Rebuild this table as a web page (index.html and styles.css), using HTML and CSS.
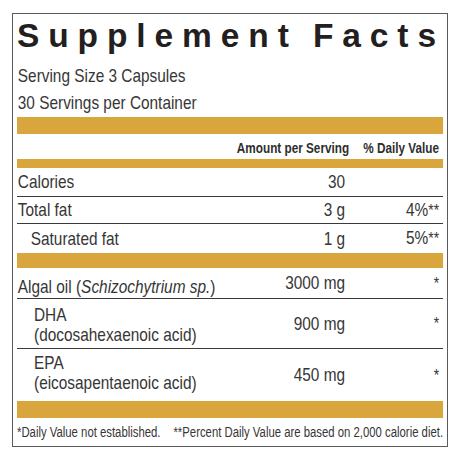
FILE: index.html
```html
<!DOCTYPE html>
<html>
<head>
<meta charset="utf-8">
<link rel="stylesheet" href="styles.css">
</head>
<body>
<div class="label">
  <h1 class="title">Supplement Facts</h1>
  <div class="content">
    <div class="serving first">Serving Size 3 Capsules</div>
    <div class="serving">30 Servings per Container</div>
    <div class="bar bar-top"></div>
    <div class="row head">
      <span></span>
      <span class="amt">Amount per Serving</span>
      <span class="dv">% Daily Value</span>
    </div>
    <div class="bar bar-thin"></div>
    <div class="row r-cal lined">
      <span class="name">Calories</span>
      <span class="amt">30</span>
      <span class="dv"></span>
    </div>
    <div class="row r-fat lined">
      <span class="name">Total fat</span>
      <span class="amt">3 g</span>
      <span class="dv">4%<span class="ast">**</span></span>
    </div>
    <div class="row r-sat">
      <span class="name sub">Saturated fat</span>
      <span class="amt">1 g</span>
      <span class="dv">5%<span class="ast">**</span></span>
    </div>
    <div class="bar bar-mid"></div>
    <div class="row r-algal lined">
      <span class="name">Algal oil (<i>Schizochytrium sp.</i>)</span>
      <span class="amt">3000 mg</span>
      <span class="dv"><span class="ast">*</span></span>
    </div>
    <div class="row r-dha lined">
      <span class="name sub2">DHA<br>(docosahexaenoic acid)</span>
      <span class="amt">900 mg</span>
      <span class="dv"><span class="ast">*</span></span>
    </div>
    <div class="row r-epa">
      <span class="name sub2">EPA<br>(eicosapentaenoic acid)</span>
      <span class="amt">450 mg</span>
      <span class="dv"><span class="ast">*</span></span>
    </div>
    <div class="bar bar-bottom"></div>
    <div class="foot">
      <span class="foot-a">*Daily Value not established.</span>
      <span class="foot-b">**Percent Daily Value are based on 2,000 calorie diet.</span>
    </div>
  </div>
</div>
</body>
</html>
```

FILE: styles.css
```css
html, body {
  margin: 0;
  padding: 0;
  background: #fff;
  overflow: hidden;
}

body {
  font-family: "Liberation Sans", Arial, sans-serif;
  color: #363636;
}

.label {
  box-sizing: border-box;
  width: 436px;
  height: 434px;
  margin: 13px 0 0 12px;
  border: 1px solid #5a5a5a;
  padding: 0 4px;
}

.title {
  margin: 0;
  padding: 2px 0 0 0;
  font-weight: bold;
  font-size: 33.5px;
  line-height: 40px;
  height: 40px;
  letter-spacing: 8.9px;
  word-spacing: -3px;
  color: #231f20;
  white-space: nowrap;
}

/* condensed typeface emulation: content laid out wider, then squeezed */
.content {
  width: 526px;
  transform: scaleX(0.81);
  transform-origin: 0 0;
  display: flex;
  flex-direction: column;
}

.serving {
  padding-left: 1px;
  font-size: 19px;
  line-height: 27px;
  white-space: nowrap;
}

.serving.first {
  margin-top: 6px;
}

.bar {
  background: #d9a63d;
  flex: none;
}

.bar-top { height: 17px; margin-top: 1px; }
.bar-thin { height: 9px; }
.bar-mid { height: 15px; }
.bar-bottom { height: 17px; }

.row {
  display: grid;
  grid-template-columns: 1fr 150px 116px;
  padding-right: 5px;
  font-size: 19px;
  line-height: 20px;
  box-sizing: border-box;
  flex: none;
}

.lined {
  border-bottom: 1px solid #3a3a3a;
}

.name {
  align-self: start;
  padding-left: 1px;
  white-space: nowrap;
}

.amt, .dv {
  align-self: center;
  text-align: right;
  white-space: nowrap;
}

.head {
  height: 25px;
  font-weight: bold;
  font-size: 14.5px;
  line-height: 15px;
  color: #2e2e2e;
}

.head .amt, .head .dv {
  align-self: start;
  padding-top: 7px;
}

.head .amt {
  margin-right: -5px;
}

.r-cal { height: 29px; }
.r-cal .name { padding-top: 4px; }

.r-fat { height: 27px; }
.r-fat .name { padding-top: 3px; }

.r-sat { height: 29px; }
.r-sat .name { padding-top: 5px; }

.r-algal { height: 31px; }
.r-algal .name { padding-top: 9px; }

.r-dha { height: 50px; }
.r-dha .name { padding-top: 6px; }

.r-epa { height: 52px; }
.r-epa .name { padding-top: 4px; }

.name.sub { padding-left: 17px; }
.name.sub2 { padding-left: 21px; }

.ast {
  font-size: 17px;
}

.foot {
  height: 28px;
  display: flex;
  padding: 6px 0 0 0;
  box-sizing: border-box;
  font-size: 14px;
  line-height: 16px;
  white-space: nowrap;
}

.foot-a {
  width: 195px;
}
```
